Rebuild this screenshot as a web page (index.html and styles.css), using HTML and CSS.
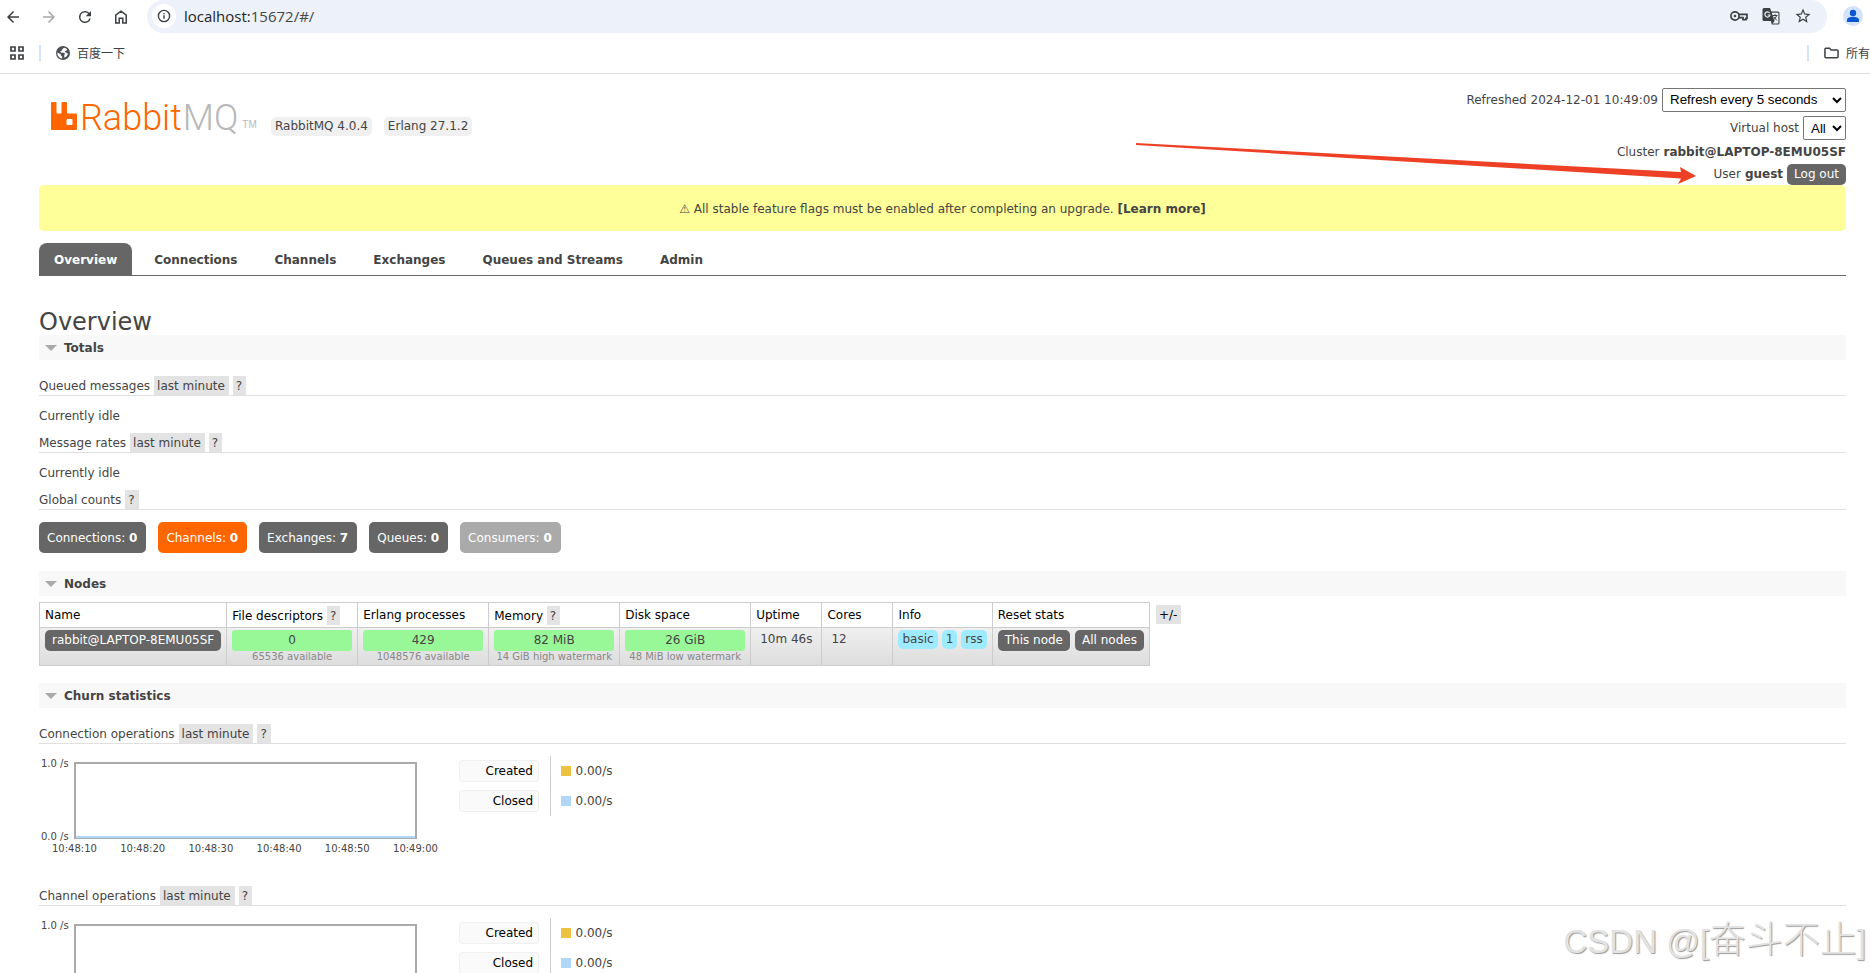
FILE: index.html
```html
<!DOCTYPE html>
<html lang="en">
<head>
<meta charset="utf-8">
<title>RabbitMQ Management</title>
<link rel="stylesheet" href="styles.css">
</head>
<body>
<div class="browser">
  <div class="toolbar">
    <nav class="nav-icons" aria-label="Browser">
      <button class="icon-btn" aria-label="Back"><svg viewBox="0 0 24 24"><path d="M20 11H7.83l5.59-5.59L12 4l-8 8 8 8 1.41-1.41L7.83 13H20z"/></svg></button>
      <button class="icon-btn faded" aria-label="Forward"><svg viewBox="0 0 24 24"><path d="M12 4l-1.41 1.41L16.17 11H4v2h12.17l-5.58 5.59L12 20l8-8z"/></svg></button>
      <button class="icon-btn" aria-label="Reload"><svg viewBox="0 0 24 24"><path d="M17.65 6.35A7.96 7.96 0 0 0 12 4a8 8 0 1 0 7.73 10h-2.08A6 6 0 1 1 12 6c1.66 0 3.14.69 4.22 1.78L13 11h7V4z"/></svg></button>
      <button class="icon-btn" aria-label="Home"><svg viewBox="0 0 24 24" fill="none" stroke="currentColor" stroke-width="2"><path d="M5 9.6 12 4.2l7 5.4V20h-4.6v-6.400h-4.800V20H5z"/></svg></button>
    </nav>
    <div class="omnibox">
      <span class="site-info"><svg viewBox="0 0 16 16" fill="none" stroke="currentColor" stroke-width="1.600"><circle cx="8" cy="8" r="6.400"/><path d="M8 7.200v4M8 4.500v1.600"/></svg></span>
      <span class="url">localhost:<span class="url-rest">15672/#/</span></span>
      <div class="omni-icons">
        <svg viewBox="0 0 18 18" fill="none" stroke="currentColor" stroke-width="1.700"><circle cx="5" cy="9" r="4.100"/><circle cx="5" cy="9" r="1.300" fill="currentColor" stroke="none"/><path d="M8.800 7.300H17v4h-1v1.400h-3v-2H8.800"/></svg>
        <svg viewBox="0 0 18 18"><path d="M2 1h6l1.300 3.500H16a1.500 1.500 0 0 1 1.500 1.500v10A1.500 1.500 0 0 1 16 17.500H9.800L8.800 14H2A1.500 1.500 0 0 1 .5 12.500v-10A1.500 1.500 0 0 1 2 1z" fill="currentColor"/><path d="M9.700 5.700H16a.4.4 0 0 1 .4.4V16a.4.4 0 0 1-.4.4h-5.400l2-2.400z" fill="#edf1fa"/><path d="M7.600 6A2.600 2.600 0 1 0 8 8H5.700" fill="none" stroke="#edf1fa" stroke-width="1.200"/><path d="M10.500 8.500h5M13 7.200v1.300M14.500 8.500c-.5 2.200-1.800 3.600-3.200 4.600M11.700 9.800l3 3.500" fill="none" stroke="currentColor"/></svg>
        <svg viewBox="0 0 24 24"><path fill="currentColor" d="m22 9.240-7.190-.620L12 2 9.190 8.630 2 9.240l5.460 4.730L5.820 21 12 17.270 18.180 21l-1.630-7.030zM12 15.400l-3.760 2.270 1-4.280-3.320-2.880 4.380-.380L12 6.100l1.710 4.040 4.380.380-3.320 2.880 1 4.280z"/></svg>
      </div>
    </div>
    <svg class="avatar" viewBox="0 0 20 20"><circle cx="10" cy="10" r="10" fill="#d3e3fd"/><circle cx="10" cy="7" r="3.200" fill="#0b57d0"/><path d="M4 16v-2c0-2 3-3.200 6-3.200s6 1.200 6 3.200v2z" fill="#0b57d0"/></svg>
  </div>
  <div class="bookmarks">
    <svg class="apps" viewBox="0 0 14 14" fill="none" stroke="currentColor" stroke-width="1.700"><path d="M1 1h4v4H1zM9 1h4v4H9zM1 9h4v4H1zM9 9h4v4H9z"/></svg>
    <span class="divider"></span>
    <a class="bookmark" href="#baidu"><svg class="globe" viewBox="0 0 14 14"><circle cx="7" cy="7" r="7" fill="#4d5156"/><path d="M8 1.800 6.200 3.200v1.400l-2 .7 1 1.500h3l.8 1.200-.8 1.200v2.200l2-.6 1.600-2.400-.4-1.400-2-.5-.6-1.300 1.600-.5.800-1.200A6 6 0 0 0 8 1.800zM1.300 6.500a5.700 5.700 0 0 0 4.900 6.100v-1.800L4.800 9.500V8.200z" fill="#fff"/></svg>百度一下</a>
    <span class="spacer"></span>
    <span class="divider"></span>
    <a class="bookmark all" href="#all"><svg class="folder" viewBox="0 0 16 12" fill="none" stroke="currentColor" stroke-width="1.600"><path d="M1 2a1 1 0 0 1 1-1h4l1.500 1.700H14a1 1 0 0 1 1 1V10a1 1 0 0 1-1 1H2a1 1 0 0 1-1-1z"/></svg>所有</a>
  </div>
</div>

<div class="page">
  <header class="header">
    <div class="brand">
      <a class="logo" href="#/" aria-label="RabbitMQ">
        <svg class="logo-mark" viewBox="0 0 26 28"><path fill="#f60" fill-rule="evenodd" d="M1 0h3.500a1 1 0 0 1 1 1v9.500a1 1 0 0 0 1 1h3a1 1 0 0 0 1-1V1a1 1 0 0 1 1-1H15a1 1 0 0 1 1 1v9.500a1 1 0 0 0 1 1h8a1 1 0 0 1 1 1V27a1 1 0 0 1-1 1H1a1 1 0 0 1-1-1V1a1 1 0 0 1 1-1zm15.500 17a1 1 0 0 0-1 1v4a1 1 0 0 0 1 1h4a1 1 0 0 0 1-1v-4a1 1 0 0 0-1-1z"/></svg>
        <span class="word">Rabbit<span class="mq">MQ</span></span><span class="tm">TM</span>
      </a>
      <span class="version">RabbitMQ 4.0.4</span>
      <span class="version">Erlang 27.1.2</span>
    </div>
    <div class="status">
      <div class="status-row tall"><label for="refresh">Refreshed 2024-12-01 10:49:09</label><select id="refresh" class="refresh"><option>Refresh every 5 seconds</option></select></div>
      <div class="status-row tall vhost"><label for="vhost">Virtual host</label><select id="vhost"><option>All</option></select></div>
      <div class="status-row">Cluster <b>rabbit@LAPTOP-8EMU05SF</b></div>
      <div class="status-row">User <b>guest</b> <button class="btn">Log out</button></div>
    </div>
    <svg class="pointer" viewBox="0 0 560 44" aria-hidden="true"><path fill="#ee4025" d="M0 3l545 29-1-5 16 9-18 8 3-5.500L0 5z"/></svg>
  </header>

  <div class="banner"><p>⚠ All stable feature flags must be enabled after completing an upgrade. <a href="#learn"><b>[Learn more]</b></a></p></div>

  <nav class="tabs" aria-label="Main">
    <a class="tab active" href="#/">Overview</a>
    <a class="tab" href="#/connections">Connections</a>
    <a class="tab" href="#/channels">Channels</a>
    <a class="tab" href="#/exchanges">Exchanges</a>
    <a class="tab" href="#/queues">Queues and Streams</a>
    <a class="tab" href="#/users">Admin</a>
  </nav>

  <main>
    <h1>Overview</h1>
    <h2 class="bar">Totals</h2>
    <h3 class="sub first">Queued messages <button class="tag">last minute</button><button class="tag">?</button></h3>
    <p class="idle">Currently idle</p>
    <h3 class="sub">Message rates <button class="tag">last minute</button><button class="tag">?</button></h3>
    <p class="idle">Currently idle</p>
    <h3 class="sub">Global counts <button class="tag">?</button></h3>
    <div class="counts">
      <a class="count" href="#/connections">Connections: <b>0</b></a>
      <a class="count orange" href="#/channels">Channels: <b>0</b></a>
      <a class="count" href="#/exchanges">Exchanges: <b>7</b></a>
      <a class="count" href="#/queues">Queues: <b>0</b></a>
      <span class="count off">Consumers: <b>0</b></span>
    </div>

    <h2 class="bar">Nodes</h2>
    <div class="nodes">
      <table class="node-table">
        <thead><tr><th>Name</th><th>File descriptors <button class="tag">?</button></th><th>Erlang processes</th><th>Memory <button class="tag">?</button></th><th>Disk space</th><th class="mid">Uptime</th><th class="mid">Cores</th><th>Info</th><th>Reset stats</th></tr></thead>
        <tbody><tr>
          <td><a class="btn" href="#/nodes">rabbit@LAPTOP-8EMU05SF</a></td>
          <td><div class="meter">0</div><small>65536 available</small></td>
          <td><div class="meter">429</div><small>1048576 available</small></td>
          <td><div class="meter">82 MiB</div><small>14 GiB high watermark</small></td>
          <td><div class="meter">26 GiB</div><small>48 MiB low watermark</small></td>
          <td class="num">10m 46s</td>
          <td class="num">12</td>
          <td><div class="group"><span class="info">basic</span><span class="info">1</span><span class="info">rss</span></div></td>
          <td><div class="group wide"><button class="btn">This node</button><button class="btn">All nodes</button></div></td>
        </tr></tbody>
      </table>
      <button class="tag dark">+/-</button>
    </div>

    <h2 class="bar">Churn statistics</h2>
    <h3 class="sub first">Connection operations <button class="tag">last minute</button><button class="tag">?</button></h3>
    <div class="churn">
      <div class="chart">
        <div class="chart-body"><div class="y-axis"><span>1.0 /s</span><span>0.0 /s</span></div><div class="plot"></div></div>
        <div class="x-axis"><span>10:48:10</span><span>10:48:20</span><span>10:48:30</span><span>10:48:40</span><span>10:48:50</span><span>10:49:00</span></div>
      </div>
      <table class="legend">
        <tr><th><span class="key">Created</span></th><td><span class="rate created">0.00/s</span></td></tr>
        <tr><th><span class="key">Closed</span></th><td><span class="rate closed">0.00/s</span></td></tr>
      </table>
    </div>
    <h3 class="sub">Channel operations <button class="tag">last minute</button><button class="tag">?</button></h3>
    <div class="churn">
      <div class="chart">
        <div class="chart-body"><div class="y-axis"><span>1.0 /s</span></div><div class="plot"></div></div>
      </div>
      <table class="legend">
        <tr><th><span class="key">Created</span></th><td><span class="rate created">0.00/s</span></td></tr>
        <tr><th><span class="key">Closed</span></th><td><span class="rate closed">0.00/s</span></td></tr>
      </table>
    </div>
  </main>
</div>
<div class="watermark">CSDN @[<span class="cjk">奋斗不止</span>]</div>
</body>
</html>
```
FILE: styles.css
```css
* { box-sizing: border-box; }
html { height: 100%; }
body {
  margin: 0;
  height: 100%;
  overflow: hidden;
  background: #fff;
  color: #444;
  font: 12px/18px Verdana, "DejaVu Sans", "Noto Sans CJK SC", sans-serif;
}
a { color: inherit; text-decoration: none; }
button { font: inherit; color: inherit; border: 0; margin: 0; padding: 0; background: none; }
h1, h2, h3, p { margin: 0; font-size: 12px; font-weight: normal; }
svg { display: block; }

/* browser chrome */
.browser { height: 74px; border-bottom: 1px solid #dcdcdc; color: #3c4043; }
.toolbar { display: flex; height: 33px; padding: 0 7px 0 4px; }
.nav-icons { display: flex; align-items: center; gap: 18px; margin-right: 17px; }
.icon-btn svg { width: 18px; height: 18px; fill: currentColor; }
.icon-btn:last-child svg { fill: none; }
.faded { opacity: 0.45; }
.omnibox {
  flex: 1;
  display: flex;
  align-items: center;
  padding: 0 15px 2px 5px;
  background: #edf1fa;
  border-radius: 16px;
}
.site-info {
  display: grid;
  place-items: center;
  width: 24px;
  height: 24px;
  margin-right: 8px;
  border-radius: 50%;
  background: #fff;
}
.site-info svg { width: 14px; height: 14px; }
.url { font: 15px/20px "Segoe UI", "Open Sans", sans-serif; color: #1f1f1f; }
.url-rest { color: #474747; }
.omni-icons { display: flex; align-items: center; gap: 14px; margin-left: auto; }
.omni-icons svg { width: 18px; height: 18px; }
.avatar { width: 20px; height: 20px; margin: 6px 0 0 16px; align-self: flex-start; }
.bookmarks { display: flex; align-items: center; height: 40px; padding-left: 10px; white-space: nowrap; }
.apps { width: 14px; height: 14px; }
.divider { width: 2px; height: 16px; margin: 0 15px; background: #d3e3fd; }
.bookmark { display: flex; align-items: center; gap: 7px; font-family: "Noto Sans CJK SC", sans-serif; }
.globe { width: 14px; height: 14px; }
.folder { width: 16px; height: 12px; }
.spacer { flex: 1; }
.all { width: 46px; overflow: hidden; }

/* page header */
.page { padding: 0 24px 0 39px; }
.header { position: relative; display: flex; justify-content: space-between; height: 111px; }
.brand { display: flex; align-items: flex-start; padding: 28px 0 0 12px; }
.logo { display: flex; align-items: flex-end; width: 208px; margin-right: 12px; color: #f60; white-space: nowrap; }
.logo-mark { flex: none; width: 26px; height: 28px; margin-right: 3px; }
.word { font: 36px/32px Roboto, sans-serif; font-weight: 300; height: 28px; }
.mq { margin-left: 1px; color: #b8b8b8; }
.tm { margin-left: 4px; font: 10px/10px "Liberation Sans", sans-serif; color: #b8b8b8; }
.version { margin: 15px 12px 0 0; padding: 0 4px; line-height: 19px; border-radius: 5px; background: #f0f0f0; }
.status { display: flex; flex-direction: column; align-items: flex-end; padding-top: 14px; }
.status-row { display: flex; align-items: center; gap: 4px; height: 22px; white-space: nowrap; }
.tall { height: 24px; }
.vhost { height: 25px; margin: 4px 0 1px; }
select { height: 100%; padding: 0 3px; border: 1px solid #767676; border-radius: 2px; background: #fff; color: #000; }
.refresh { width: 184px; }
b { font-weight: bold; }
.btn {
  display: inline-block;
  padding: 0 7px;
  height: 21px;
  line-height: 21px;
  border-radius: 5px;
  background: #666;
  color: #fff;
  white-space: nowrap;
}
.pointer { position: absolute; right: 150px; top: 66px; width: 560px; height: 44px; pointer-events: none; }
.banner { padding: 15px 14px 13px; text-align: center; border-radius: 5px; background: #ff9; }

/* tabs */
.tabs { display: flex; gap: 7px; margin-top: 12px; border-bottom: 1px solid #666; }
.tab { padding: 2px 15px 0; line-height: 30px; font-weight: bold; }
.active { background: #666; color: #fff; border-radius: 8px 8px 0 0; }

/* sections */
h1 { margin-top: 34px; font-size: 24px; line-height: 25px; }
.bar {
  display: flex;
  align-items: center;
  height: 25px;
  padding-left: 6px;
  background: #f8f8f8;
  font-weight: bold;
}
.bar::before {
  content: "";
  margin-right: 7px;
  border: 6px solid transparent;
  border-top-color: #aaa;
  border-bottom: 0;
}
.sub { display: flex; gap: 4px; height: 20px; line-height: 20px; border-bottom: 1px solid #e0e0e0; }
.first { margin-top: 16px; }
.tag { height: 19px; padding: 1px 4px 0 3px; line-height: 18px; background: #e3e3e3; }
.idle { padding: 11px 0 8px; }
.counts { display: flex; gap: 12px; margin: 12px 0 18px; }
.count { padding: 1px 9px 0 8px; line-height: 30px; border-radius: 5px; background: #666; color: #fff; }
.orange { background: #f60; }
.off { background: #aaa; }

/* node table */
.nodes { display: flex; gap: 6px; margin: 6px 0 17px; align-items: flex-start; }
.nodes .dark { margin-top: 3px; color: #000; }
.node-table { border-collapse: collapse; white-space: nowrap; }
.node-table th, .node-table td { border: 1px solid #ccc; padding: 2px 5px; text-align: left; vertical-align: top; }
.node-table th { height: 25px; padding-top: 3px; color: #000; font-weight: normal; }
.node-table th .tag { color: #444; }
.node-table tbody tr { background: linear-gradient(#f0f0f0, #ddd); }
.node-table .mid { min-width: 71px; }
.node-table .num { padding: 2px 9px; }
.meter { width: 120px; line-height: 21px; text-align: center; border-radius: 3px; background: #98f898; }
small { display: block; font-size: 10px; line-height: 12px; text-align: center; color: #888; }
.group { display: flex; gap: 4px; }
.wide { gap: 5px; }
.info { padding: 0 4px; line-height: 19px; border-radius: 5px; background: #9eebff; }

/* churn */
.churn { display: flex; height: 142px; padding-top: 12px; }
.chart { width: 420px; padding-top: 2px; font-size: 10px; line-height: 12px; }
.chart-body { display: flex; height: 85px; }
.y-axis { display: flex; flex-direction: column; justify-content: space-between; width: 35px; padding-left: 2px; white-space: nowrap; }
.plot { width: 343px; margin: 4px 0; border: 2px solid #aaa; border-bottom-width: 1px; box-shadow: inset 0 -2px #afd8f8; }
.x-axis { display: flex; justify-content: space-between; width: 386px; margin-left: 13px; }
.legend { border-collapse: collapse; height: 60px; }
.legend th { width: 91px; padding: 0 10px 0 0; border-right: 1px solid #ccc; text-align: right; }
.legend td { padding: 0 0 0 10px; }
.key { display: block; width: 80px; padding: 0 5px; line-height: 20px; border: 1px solid #f0f0f0; border-radius: 3px; background: #fafafa; color: #000; font-weight: normal; }
.rate { display: flex; align-items: center; gap: 5px; }
.rate::before { content: ""; width: 10px; height: 10px; background: #afd8f8; }
.created::before { background: #edc240; }

.watermark {
  position: absolute;
  right: 4px;
  bottom: 7px;
  font: 33px/48px "Liberation Sans", "Noto Sans CJK SC", sans-serif;
  font-weight: 300;
  color: #e2e2e2;
  text-shadow: 1px 1px 1px #999;
}
.cjk { font-size: 37px; }
```
